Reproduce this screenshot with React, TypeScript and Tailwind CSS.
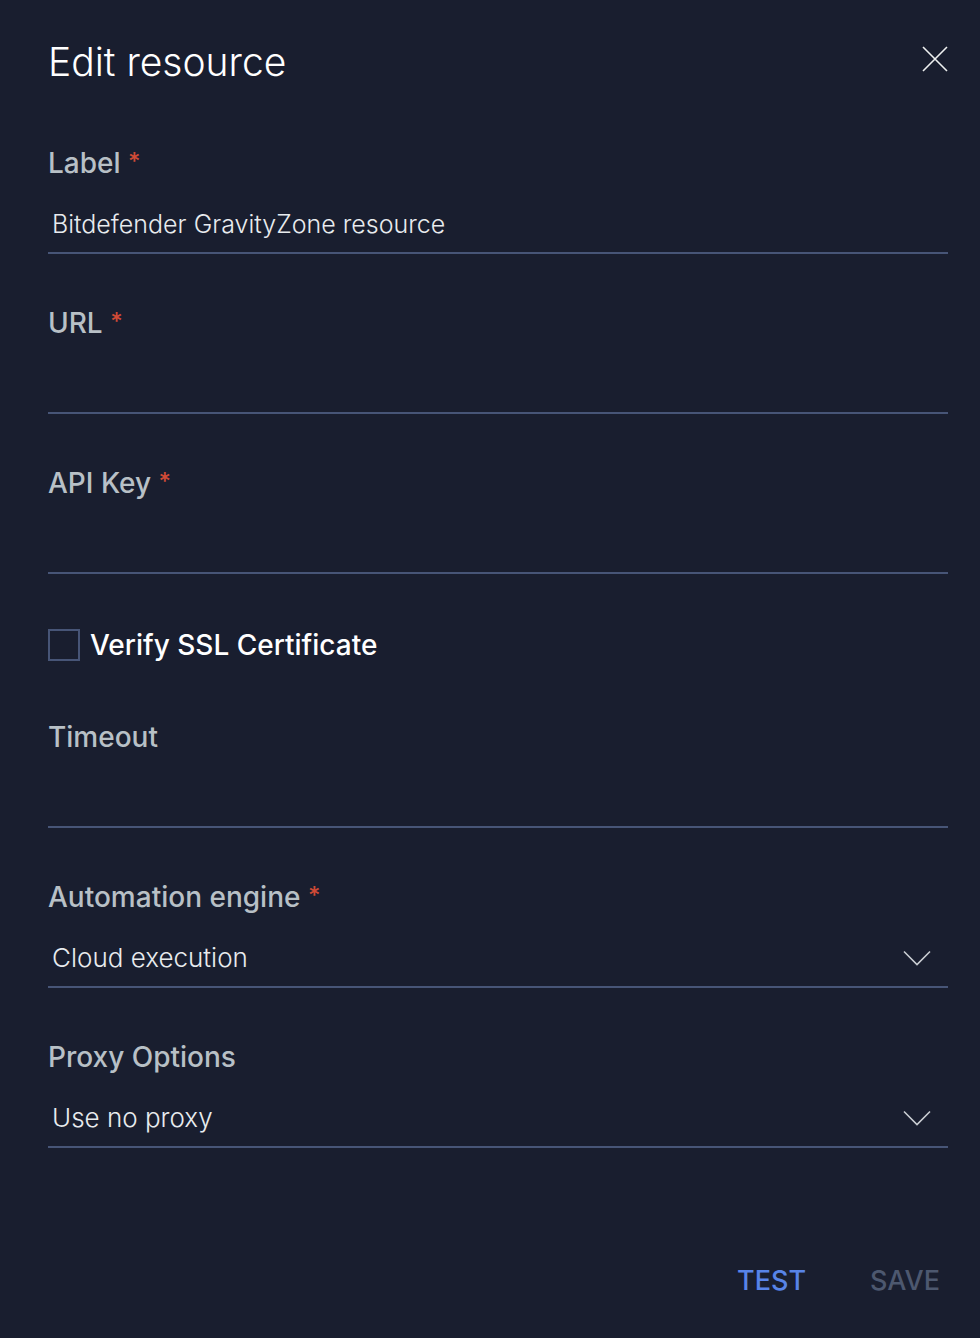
import { useState, type ReactNode } from "react";

type FieldProps = {
  id: string;
  label: string;
  required?: boolean;
  children: ReactNode;
};

function Field({ id, label, required, children }: FieldProps) {
  return (
    <div>
      <label
        htmlFor={id}
        className="block text-[28px] leading-[42px] font-medium text-[#b8c0c6]"
      >
        {label}
        {required && (
          <>
            {" "}
            <span className="align-text-top text-2xl leading-8 text-[#cf4a36]">
              *
            </span>
          </>
        )}
      </label>
      {children}
    </div>
  );
}

type TextFieldProps = Omit<FieldProps, "children"> & { defaultValue?: string };

function TextField({ defaultValue = "", ...field }: TextFieldProps) {
  return (
    <Field {...field}>
      <input
        id={field.id}
        type="text"
        required={field.required}
        defaultValue={defaultValue}
        className="block h-[70px] w-full border-b-2 border-[#475577] bg-transparent px-1 pt-3 text-[25px] font-light text-[#e8ebee] outline-none focus:border-[#5884e8]"
      />
    </Field>
  );
}

type SelectFieldProps = Omit<FieldProps, "children"> & { options: string[] };

function SelectField({ options, ...field }: SelectFieldProps) {
  return (
    <Field {...field}>
      <div className="relative">
        <select
          id={field.id}
          required={field.required}
          className="block h-[70px] w-full appearance-none border-b-2 border-[#475577] bg-transparent px-1 pt-2.5 text-[26px] font-light text-[#e8ebee] outline-none focus:border-[#5884e8]"
        >
          {options.map((option) => (
            <option key={option}>{option}</option>
          ))}
        </select>
        <svg
          viewBox="0 0 28 16"
          fill="none"
          stroke="#c9cdd2"
          strokeWidth="1.6"
          className="pointer-events-none absolute right-[17px] bottom-[22px] h-4 w-7"
          aria-hidden="true"
        >
          <path d="M1 1.5 14 14.5 27 1.5" />
        </svg>
      </div>
    </Field>
  );
}

export default function App() {
  const [verifySsl, setVerifySsl] = useState(false);

  return (
    <main className="flex min-h-screen flex-col bg-[#191e2f] pr-8 pl-12 font-['Inter',sans-serif]">
      <header className="flex items-center justify-between pt-8">
        <h1 className="text-[39px] leading-[60px] font-light text-white">
          Edit resource
        </h1>
        <button type="button" aria-label="Close" className="-mt-1.5">
          <svg
            viewBox="0 0 26 26"
            fill="none"
            stroke="#eef0f0"
            strokeWidth="1.6"
            className="size-[26px]"
            aria-hidden="true"
          >
            <path d="M1 1 25 25M25 1 1 25" />
          </svg>
        </button>
      </header>

      <form className="flex grow flex-col gap-12 pt-[50px]">
        <TextField
          id="label"
          label="Label"
          required
          defaultValue="Bitdefender GravityZone resource"
        />
        <TextField id="url" label="URL" required />
        <TextField id="api-key" label="API Key" required />

        <label className="flex h-[46px] items-center gap-[10px] text-[28px] font-medium text-white">
          <input
            type="checkbox"
            checked={verifySsl}
            onChange={(event) => setVerifySsl(event.target.checked)}
            className="size-8 appearance-none border-2 border-[#475577] checked:bg-[#5884e8]"
          />
          Verify SSL Certificate
        </label>

        <TextField id="timeout" label="Timeout" />
        <SelectField
          id="engine"
          label="Automation engine"
          required
          options={["Cloud execution"]}
        />
        <SelectField
          id="proxy"
          label="Proxy Options"
          options={["Use no proxy"]}
        />

        <footer className="mt-auto flex justify-end gap-16 pr-2 pb-[37px] text-[27px] leading-10 font-medium">
          <button type="button" className="text-[#5884e8]">
            TEST
          </button>
          <button type="submit" disabled className="text-[#4d586f]">
            SAVE
          </button>
        </footer>
      </form>
    </main>
  );
}
